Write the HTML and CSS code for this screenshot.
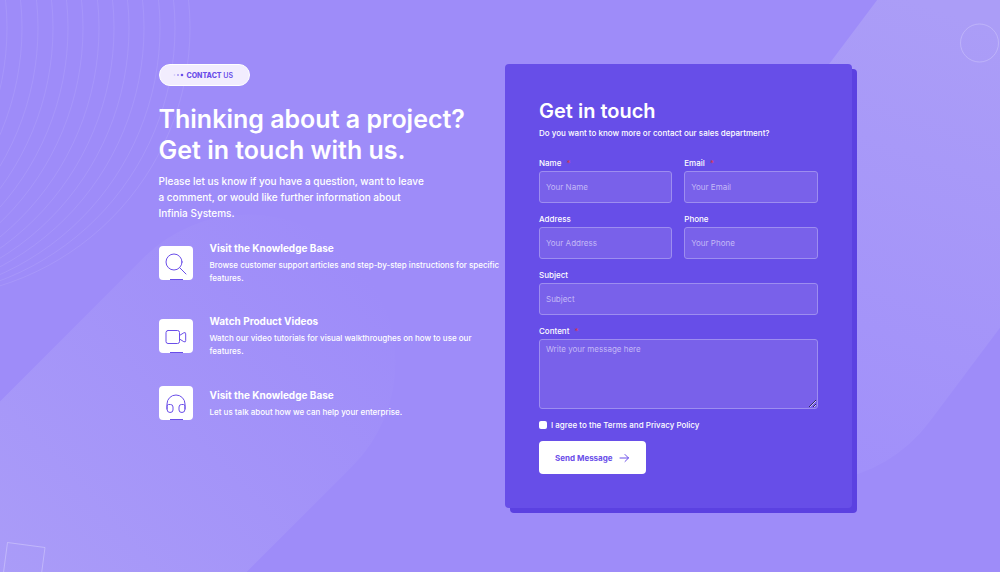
FILE: index.html
```html
<!DOCTYPE html>
<html lang="en">
<head>
<meta charset="utf-8">
<meta name="viewport" content="width=device-width, initial-scale=1">
<title>Contact us</title>
<link rel="stylesheet" href="styles.css">
</head>
<body>
<main class="contact">
  <svg class="decor decor-left" width="420" height="572" viewBox="0 0 420 572" aria-hidden="true">
    <defs>
      <linearGradient id="fadeLeft" gradientUnits="userSpaceOnUse" x1="0" y1="580" x2="350" y2="258">
        <stop offset="0" stop-color="#aa9cf8"/>
        <stop offset="1" stop-color="#9e8cf9"/>
      </linearGradient>
    </defs>
    <path d="M248 362L-199 809" fill="none" stroke="url(#fadeLeft)" stroke-width="295" stroke-linecap="round"/>
    <g fill="none" stroke="#fff" stroke-opacity=".09">
      <circle cx="-80" cy="28" r="270"/><circle cx="-95" cy="28" r="270"/><circle cx="-110" cy="28" r="270"/>
      <circle cx="-126" cy="28" r="270"/><circle cx="-141" cy="28" r="270"/><circle cx="-156" cy="28" r="270"/>
      <circle cx="-171" cy="28" r="270"/><circle cx="-187" cy="28" r="270"/><circle cx="-202" cy="28" r="270"/>
      <circle cx="-217" cy="28" r="270"/><circle cx="-232" cy="28" r="270"/><circle cx="-248" cy="28" r="270"/>
      <circle cx="-263" cy="28" r="270"/>
    </g>
    <path d="M7.500 542.500L45 547.500L40 585L2.500 580Z" fill="none" stroke="#fff" stroke-opacity=".28"/>
  </svg>
  <svg class="decor decor-right" width="400" height="572" viewBox="600 0 400 572" aria-hidden="true">
    <defs>
      <linearGradient id="fadeRight" gradientUnits="userSpaceOnUse" x1="1000" y1="30" x2="850" y2="470">
        <stop offset="0" stop-color="#ab9df7"/>
        <stop offset="1" stop-color="#a190fa"/>
      </linearGradient>
    </defs>
    <path d="M811 334L1111 -66" fill="none" stroke="url(#fadeRight)" stroke-width="295" stroke-linecap="round"/>
    <circle cx="979.500" cy="43" r="19" fill="none" stroke="#fff" stroke-opacity=".22"/>
  </svg>

  <div class="container">
    <section class="intro">
      <p class="badge">
        <svg width="12" height="6" viewBox="0 0 12 6" aria-hidden="true"><g fill="#6a4ee9"><circle cx="2.500" cy="3" r=".8" opacity=".3"/><circle cx="6" cy="3" r="1" opacity=".55"/><circle cx="10" cy="3" r="1.300"/></g></svg>
        <span><b>CONTACT</b> US</span>
      </p>
      <h1>Thinking about a project?<br>Get in touch with us.</h1>
      <p class="lead">Please let us know if you have a question, want to leave<br>a comment, or would like further information about<br>Infinia Systems.</p>
      <ul class="features">
        <li class="feature">
          <span class="feature-icon"><svg width="22" height="22" viewBox="0 0 22 22" aria-hidden="true"><circle cx="9" cy="9" r="8"/><path d="M14.700 14.700L21 21"/></svg></span>
          <div><h2>Visit the Knowledge Base</h2><p>Browse customer support articles and step-by-step instructions for specific<br>features.</p></div>
        </li>
        <li class="feature">
          <span class="feature-icon"><svg width="22" height="22" viewBox="0 0 22 22" aria-hidden="true"><rect x="1" y="4.500" width="13.500" height="13" rx="2"/><path d="M14.500 9.500L18.800 6.800Q20.700 6 20.700 7.800V14.700Q20.700 16.500 18.800 15.700L14.500 13"/></svg></span>
          <div><h2>Watch Product Videos</h2><p>Watch our video tutorials for visual walkthroughes on how to use our<br>features.</p></div>
        </li>
        <li class="feature">
          <span class="feature-icon"><svg width="22" height="22" viewBox="0 0 22 22" aria-hidden="true"><path d="M2 16V11A9 9 0 0 1 20 11V16"/><path d="M2 13Q2 11.500 3.500 11.500H5.500Q8 11.500 8 14V17Q8 19.500 5 19.500T2 16.500ZM20 13Q20 11.500 18.500 11.500H16.500Q14 11.500 14 14V17Q14 19.500 17 19.500T20 16.500Z"/></svg></span>
          <div><h2>Visit the Knowledge Base</h2><p>Let us talk about how we can help your enterprise.</p></div>
        </li>
      </ul>
    </section>

    <section class="card">
      <h2 class="card-title">Get in touch</h2>
      <p class="card-sub">Do you want to know more or contact our sales department?</p>
      <form class="form">
        <div class="field"><label for="name">Name <span class="req">*</span></label><input id="name" type="text" placeholder="Your Name"></div>
        <div class="field"><label for="email">Email <span class="req">*</span></label><input id="email" type="email" placeholder="Your Email"></div>
        <div class="field"><label for="address">Address</label><input id="address" type="text" placeholder="Your Address"></div>
        <div class="field"><label for="phone">Phone</label><input id="phone" type="tel" placeholder="Your Phone"></div>
        <div class="field wide"><label for="subject">Subject</label><input id="subject" type="text" placeholder="Subject"></div>
        <div class="field wide"><label for="content">Content <span class="req">*</span></label><textarea id="content" placeholder="Write your message here"></textarea></div>
        <div class="agree wide"><input id="agree" type="checkbox"><label for="agree">I agree to the Terms and Privacy Policy</label></div>
        <button class="send" type="submit">Send Message
          <svg width="11" height="10" viewBox="0 0 11 10" aria-hidden="true"><path d="M1 5H9.500M6 1.500L9.500 5L6 8.500"/></svg>
        </button>
      </form>
    </section>
  </div>
</main>
</body>
</html>
```
FILE: styles.css
```css
* { box-sizing: border-box; }

body {
  margin: 0;
  background: #9e8cf9;
  color: #fff;
  font-family: Inter, "Liberation Sans", sans-serif;
  font-size: 8px;
}

h1, h2, p, ul { margin: 0; padding: 0; }

.contact {
  position: relative;
  min-height: 100vh;
  overflow: hidden;
  padding: 64px 0 58px 10px;
}

.decor { position: absolute; top: 0; }
.decor-left { left: 0; }
.decor-right { right: 0; }

.container {
  position: relative;
  display: grid;
  grid-template-columns: 1fr 1fr;
  max-width: 693px;
  margin: 0 auto;
}

.badge {
  display: inline-flex;
  align-items: center;
  gap: 3px;
  height: 22px;
  padding: 0 16px 0 12px;
  border: 1px solid #fff;
  border-radius: 11px;
  background: #f2edfe;
  color: #6a4ee9;
  font-size: 7px;
  font-weight: 600;
}
.badge b { font-weight: 800; }

h1 {
  margin-top: 18px;
  font-size: 25px;
  font-weight: 600;
  line-height: 31px;
  white-space: nowrap;
}

.lead {
  margin-top: 7px;
  font-size: 10px;
  font-weight: 500;
  line-height: 16px;
  white-space: nowrap;
}

.features {
  display: grid;
  gap: 28px;
  margin-top: 19px;
  list-style: none;
}

.feature {
  display: flex;
  align-items: center;
  gap: 17px;
}
.feature h2 {
  margin-bottom: 2px;
  font-size: 10px;
  font-weight: 700;
  line-height: 17px;
}
.feature p {
  font-weight: 500;
  line-height: 13px;
  white-space: nowrap;
}

.feature-icon {
  position: relative;
  display: grid;
  place-items: center;
  flex: none;
  width: 34px;
  height: 34px;
  padding-top: 2px;
  border-radius: 4px;
  background: #fff;
}
.feature-icon::after {
  content: "";
  position: absolute;
  bottom: 0;
  left: 11px;
  width: 13px;
  height: 1px;
  background: #6a4ee9;
}
.feature-icon svg {
  fill: none;
  stroke: #6a4ee9;
  stroke-linecap: round;
}

.card {
  padding: 34px;
  border-radius: 4px;
  background: #674ee8;
  box-shadow: 5px 5px 0 #5b41e1;
}
.card-title {
  font-size: 20px;
  font-weight: 600;
  line-height: 26px;
}
.card-sub {
  margin-top: 2px;
  font-weight: 500;
  line-height: 15px;
}

.form {
  display: grid;
  grid-template-columns: 1fr 1fr;
  gap: 9px 12px;
  margin-top: 15px;
}
.wide { grid-column: 1 / -1; }

.field {
  display: grid;
  gap: 1px;
}
.field label, .agree label {
  font-weight: 500;
  line-height: 14px;
}
.req {
  margin-left: 3px;
  color: #d8364f;
}

.field input, .field textarea {
  width: 100%;
  height: 32px;
  padding: 0 6px;
  border: 1px solid #9d8df0;
  border-radius: 3px;
  background: #7961ea;
  color: #fff;
  font: inherit;
}
.field textarea {
  height: 70px;
  padding: 3px 6px;
  line-height: 12px;
}
.field ::placeholder { color: #c4b9f7; opacity: 1; }

.agree {
  display: flex;
  align-items: center;
  gap: 4px;
}
.agree input {
  appearance: none;
  width: 8px;
  height: 8px;
  margin: 0;
  border-radius: 2px;
  background: #fff;
}
.agree input:checked { box-shadow: inset 0 0 0 2px #fff; background: #5b41e1; }

.send {
  display: flex;
  align-items: center;
  justify-content: center;
  justify-self: start;
  gap: 6px;
  height: 33px;
  padding: 0 16px;
  border: 0;
  border-radius: 4px;
  background: #fff;
  color: #6a4ee9;
  font: inherit;
  font-weight: 700;
}
.send svg {
  fill: none;
  stroke: currentColor;
  stroke-linecap: round;
  stroke-linejoin: round;
}
```
